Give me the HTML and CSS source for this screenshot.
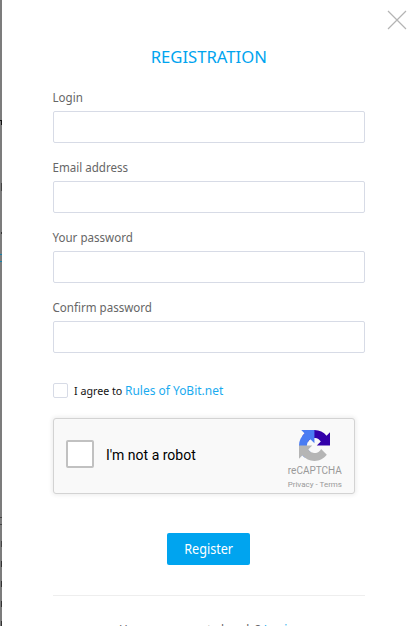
FILE: index.html
```html
<!DOCTYPE html>
<html lang="en">
<head>
<meta charset="utf-8">
<title>Registration</title>
<link rel="stylesheet" href="styles.css">
</head>
<body>
<div class="backdrop"></div>
<main class="panel">
  <button class="close" aria-label="Close"><svg width="20" height="20" viewBox="0 0 20 20"><path d="M1 1L19 19M19 1L1 19"/></svg></button>
  <h1><span>REGISTRATION</span></h1>
  <form>
    <div class="field"><label for="login">Login</label><input id="login" type="text"></div>
    <div class="field"><label for="email">Email address</label><input id="email" type="text"></div>
    <div class="field"><label for="pass">Your password</label><input id="pass" type="password"></div>
    <div class="field"><label for="confirm">Confirm password</label><input id="confirm" type="password"></div>
    <div class="agree"><i class="check"></i><span class="agree-text">I agree to</span><a class="rules">Rules of YoBit.net</a></div>
    <div class="captcha">
      <i class="captcha-check"></i>
      <span class="captcha-text">I'm not a robot</span>
      <div class="captcha-brand">
        <svg width="31" height="31" viewBox="0 0 64 64">
          <path fill="#3300aa" d="M64 31.955V4.687l-7.160 7.160C50.978 4.674 42.033.093 32.050.093c-10.400 0-19.635 4.960-25.458 12.640l11.736 11.860a15.550 15.550 0 0 1 4.754-5.334c2.050-1.600 4.952-2.906 8.968-2.906.485 0 .860.057 1.135.163 4.976.393 9.288 3.140 11.828 7.124l-8.307 8.307z"/>
          <path fill="#4a7cf3" d="M31.862.094H4.595l7.160 7.160C4.580 13.120 0 22.067 0 32.050c0 10.400 4.960 19.635 12.640 25.458L24.500 45.770a15.550 15.550 0 0 1-5.333-4.754c-1.600-2.050-2.906-4.952-2.906-8.968 0-.485.057-.860.163-1.135.393-4.976 3.140-9.288 7.124-11.828l8.307 8.307z"/>
          <path fill="#b5b5b5" d="M0 32.045v27.268l7.160-7.160c5.860 7.173 14.805 11.754 24.790 11.754 10.400 0 19.635-4.960 25.458-12.640L45.680 39.400a15.550 15.550 0 0 1-4.754 5.334c-2.050 1.600-4.952 2.906-8.968 2.906-.485 0-.860-.057-1.135-.163-4.976-.393-9.288-3.140-11.828-7.124l8.307-8.307z"/>
        </svg>
        <span class="brand-name">reCAPTCHA</span>
        <span class="brand-links">Privacy - Terms</span>
      </div>
    </div>
    <button class="submit" type="button"><span>Register</span></button>
  </form>
  <footer><span>Have an account already? <a>Login</a></span></footer>
</main>
</body>
</html>
```
FILE: styles.css
```css
* { box-sizing: border-box; }
body {
  margin: 0;
  height: 626px;
  overflow: hidden;
  display: flex;
  background: #fff;
  font-family: "Noto Sans", sans-serif;
}
.backdrop {
  width: 2px;
  background:
    linear-gradient(#111, #111) 0 120px / 2px 1px no-repeat,
    linear-gradient(#111, #111) 1px 121px / 1px 4px no-repeat,
    linear-gradient(#444, #444) 1px 183px / 1px 8px no-repeat,
    linear-gradient(#333, #333) 1px 232px / 1px 2px no-repeat,
    linear-gradient(#1482aa, #1482aa) 0 254px / 2px 1px no-repeat,
    linear-gradient(#1482aa, #1482aa) 0 261px / 2px 1px no-repeat,
    linear-gradient(#444, #444) 0 517px / 2px 1px no-repeat,
    linear-gradient(#444, #444) 0 524px / 2px 1px no-repeat,
    linear-gradient(#444, #444) 1px 541px / 1px 6px no-repeat,
    linear-gradient(#333, #333) 1px 561px / 1px 6px no-repeat,
    linear-gradient(#333, #333) 1px 581px / 1px 6px no-repeat,
    linear-gradient(#333, #333) 1px 601px / 1px 6px no-repeat,
    linear-gradient(#333, #333) 1px 621px / 1px 5px no-repeat,
    #7c7c7c;
}
.panel {
  position: relative;
  flex: 1;
  padding: 46px 50px 0 51px;
}
.close {
  position: absolute;
  top: 10px;
  right: 8px;
  width: 20px;
  height: 20px;
  padding: 0;
  border: 0;
  background: none;
}
.close svg { display: block; fill: none; stroke: #b4b4b4; stroke-width: 1.2; }
h1 {
  margin: 0 0 21px;
  font-size: 17px;
  line-height: 22px;
  font-weight: 400;
  color: #00a4ef;
  text-align: center;
}
h1 span { display: inline-block; transform: translateX(-.5px) scaleX(.98); }
a { color: #1aabef; }
.field { height: 70px; }
label {
  display: block;
  width: max-content;
  height: 22px;
  line-height: 17px;
  font-size: 13px;
  color: #666;
  transform: translateX(-.5px) scaleX(.89);
  transform-origin: left;
}
input {
  display: block;
  width: 312px;
  height: 32px;
  border: 1px solid #d7dbe6;
  border-radius: 2px;
  background: #fff;
}
.agree { display: flex; align-items: center; height: 16px; margin-top: 13px; }
.check { width: 15px; height: 15px; border: 1px solid #d7dbe6; border-radius: 2px; }
.agree-text {
  width: 51px;
  margin-left: 6px;
  font-size: 11px;
  color: #111;
  white-space: nowrap;
  transform: scaleX(.97);
  transform-origin: left;
}
.rules { font-size: 13px; white-space: nowrap; transform: scaleX(.92); transform-origin: left; }
.captcha {
  display: flex;
  align-items: center;
  width: 302px;
  height: 76px;
  margin-top: 20px;
  padding: 0 12px;
  background: #f9f9f9;
  border: 1px solid #d3d3d3;
  border-radius: 3px;
  box-shadow: 0 0 4px 1px rgba(0, 0, 0, .08);
  font-family: Roboto, sans-serif;
}
.captcha-check {
  width: 28px;
  height: 28px;
  margin-top: -4px;
  border: 2px solid #c1c1c1;
  border-radius: 2px;
  background: #fff;
}
.captcha-text { margin: -3px 0 0 12px; font-size: 14px; color: #000; }
.captcha-brand {
  display: flex;
  flex-direction: column;
  align-items: center;
  margin: 9px 0 0 auto;
  color: #999;
}
.captcha-brand svg { display: block; }
.brand-name { font-size: 10px; line-height: 13px; margin-top: 3px; }
.brand-links { font-size: 8px; line-height: 15px; }
.submit {
  display: block;
  width: 83px;
  height: 32px;
  margin: 39px auto 0 114px;
  padding: 0;
  border: 0;
  border-radius: 2px;
  background: #00a4ef;
  color: #fff;
  font: 14px/32px "Noto Sans", sans-serif;
}
.submit span { display: inline-block; transform: translateX(.5px) scaleX(.9); }
footer {
  width: 312px;
  height: 31px;
  margin-top: 30px;
  padding-top: 24px;
  overflow: hidden;
  border-top: 1px solid #eee;
  font-size: 13px;
  line-height: 18px;
  color: #666;
  white-space: nowrap;
}
footer span { display: block; width: max-content; margin-left: 66px; transform: scaleX(.91); transform-origin: left; }
```
